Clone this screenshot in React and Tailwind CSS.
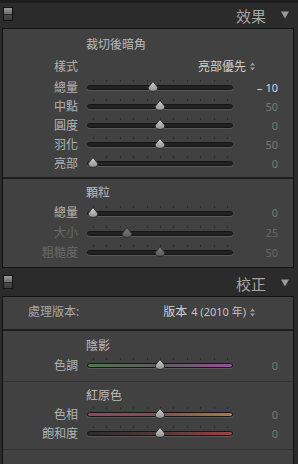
import React from "react";

const FONT = { fontFamily: '"Noto Sans", "Noto Sans CJK TC", sans-serif' };

function Checkbox() {
  return (
    <div className="mt-[7px] ml-[3px] flex h-[14px] w-[10px] flex-col border border-[#141414]">
      <div className="h-[6px] bg-linear-to-b from-[#9c9c9c] to-[#6c6c6c]" />
      <div className="h-[1px] bg-[#2a2a2a]" />
      <div className="flex-1 bg-linear-to-b from-[#4a4a4a] to-[#3a3a3a]" />
    </div>
  );
}

function Header({ title, stripe }) {
  return (
    <div className={`flex h-[28px] items-start ${stripe ? "border-t-[3px] border-[#1e1e1e]" : ""}`}>
      <div className={stripe ? "-mt-[3px]" : ""}>
        <Checkbox />
      </div>
      <div className="flex-1" />
      <div className={`${stripe ? "mt-[5px]" : "mt-[8px]"} text-[15px] leading-[16px] text-[#a6a6a6]`}>{title}</div>
      <svg width="8" height="8" viewBox="0 0 8 8" className={`${stripe ? "mt-[8px]" : "mt-[11px]"} ml-[15px] mr-[9px]`}>
        <polygon points="0,0.5 8,0.5 4,7.5" fill="#9a9a9a" />
      </svg>
    </div>
  );
}

function UpDown() {
  return (
    <svg width="5" height="9" viewBox="0 0 5 9" className="ml-[4px]">
      <polygon points="2.5,0.5 5,3.5 0,3.5" fill="#9a9a9a" />
      <polygon points="0,5.5 5,5.5 2.5,8.5" fill="#9a9a9a" />
    </svg>
  );
}

const TICKS = [0, 1, 2, 3, 4, 5, 6, 7, 8, 9, 10];

function Slider({ pos, disabled, track }) {
  const left = 6 + pos * 134;
  return (
    <div className="relative h-[19px] w-[146px]">
      {TICKS.map((i) => (
        <div
          key={i}
          className="absolute top-[2px] h-[2px] w-[1px] bg-[#2c2c2c]"
          style={{ left: 6 + i * 13.4 }}
        />
      ))}
      <div
        className={`absolute left-0 right-0 top-[7px] h-[5px] rounded-full border border-[#161616] shadow-[0_1px_0_#585858] ${
          track || "bg-[#222222]"
        }`}
      />
      <svg
        width="12"
        height="11"
        viewBox="0 0 12 11"
        className="absolute top-[3px]"
        style={{ left: left - 6 }}
      >
        <defs>
          <linearGradient id={disabled ? "tgd" : "tg"} x1="0" y1="0" x2="0" y2="1">
            <stop offset="0" stopColor={disabled ? "#7a7a7a" : "#d2d2d2"} />
            <stop offset="1" stopColor={disabled ? "#5c5c5c" : "#909090"} />
          </linearGradient>
        </defs>
        <path
          d="M6 0.6 L10.6 6.2 Q11.2 10.3 6 10.3 Q0.8 10.3 1.4 6.2 Z"
          fill={`url(#${disabled ? "tgd" : "tg"})`}
          stroke="#262626"
          strokeWidth="0.8"
        />
      </svg>
    </div>
  );
}

function SliderRow({ label, value, pos, disabled, bright, track, h = "h-[19px]" }) {
  return (
    <div className={`flex ${h} items-center`}>
      <div
        className={`w-[75px] text-right text-[12px] leading-[14px] ${
          disabled ? "text-[#6a6a6a]" : "text-[#b2b2b2]"
        }`}
      >
        {label}
      </div>
      <div className="ml-[9px]">
        <Slider pos={pos} disabled={disabled} track={track} />
      </div>
      <div
        className={`w-[45px] text-right text-[11px] leading-[14px] ${
          bright ? "text-[#d8d8d8]" : disabled ? "text-[#666666]" : "text-[#787878]"
        }`}
      >
        {value}
      </div>
    </div>
  );
}

function Title({ children, h = "h-[19px]" }) {
  return (
    <div className={`flex ${h} items-center pl-[83px] text-[12px] leading-[14px] text-[#bcbcbc]`}>
      {children}
    </div>
  );
}

export default function App() {
  return (
    <div className="h-[464px] w-[298px] overflow-hidden bg-[#2b2b2b]" style={FONT}>
      <Header title="效果" stripe />
      <div className="ml-[2px] w-[292px] border border-[#121212] bg-[#414141]">
        <div className="border-b-2 border-[#1c1c1c] pb-[4px] pt-[6px]">
          <Title>裁切後暗角</Title>
          <div className="mt-[3px] flex h-[19px] items-center">
            <div className="w-[75px] text-right text-[12px] leading-[14px] text-[#b2b2b2]">樣式</div>
            <div className="flex flex-1 items-center justify-end pr-[38px] text-[12px] leading-[14px] text-[#d0d0d0]">
              亮部優先
              <UpDown />
            </div>
          </div>
          <div className="mt-[2px]">
            <SliderRow label="總量" value="– 10" pos={0.45} bright />
            <SliderRow label="中點" value="50" pos={0.5} />
            <SliderRow label="圓度" value="0" pos={0.5} />
            <SliderRow label="羽化" value="50" pos={0.5} />
            <SliderRow label="亮部" value="0" pos={0} />
          </div>
        </div>
        <div className="pb-[5px] pt-[4px]">
          <Title h="h-[20px]">顆粒</Title>
          <SliderRow label="總量" value="0" pos={0} h="h-[20px]" />
          <SliderRow label="大小" value="25" pos={0.25} disabled h="h-[20px]" />
          <SliderRow label="粗糙度" value="50" pos={0.5} disabled />
        </div>
      </div>
      <Header title="校正" />
      <div className="ml-[2px] h-[200px] w-[292px] border border-[#121212] bg-[#414141]">
        <div className="flex h-[34px] items-center border-b-2 border-[#1c1c1c] pb-[2px]">
          <div className="pl-[25px] text-[12px] leading-[14px] text-[#a8a8a8]">處理版本:</div>
          <div className="flex flex-1 items-center justify-end pr-[38px] text-[12px] leading-[14px] text-[#d0d0d0]">
            版本 <span className="ml-[4px] text-[11px] text-[#c4c4c4]">4 (2010 年)</span>
            <UpDown />
          </div>
        </div>
        <div className="border-b border-[#343434] pb-[6px] pt-[5px]">
          <Title>陰影</Title>
          <div className="mt-[1px]">
            <SliderRow
              label="色調"
              value="0"
              pos={0.5}
              track="bg-linear-to-r from-[#4a7a44] via-[#5e5a60] to-[#94509a]"
            />
          </div>
        </div>
        <div className="border-b border-[#343434] pb-[6px] pt-[4px]">
          <Title>紅原色</Title>
          <SliderRow
            label="色相"
            value="0"
            pos={0.5}
            track="bg-linear-to-r from-[#944264] via-[#7c5252] to-[#a07c48]"
          />
          <SliderRow
            label="飽和度"
            value="0"
            pos={0.5}
            track="bg-linear-to-r from-[#2c2c2c] via-[#523838] to-[#984444]"
          />
        </div>
      </div>
    </div>
  );
}
